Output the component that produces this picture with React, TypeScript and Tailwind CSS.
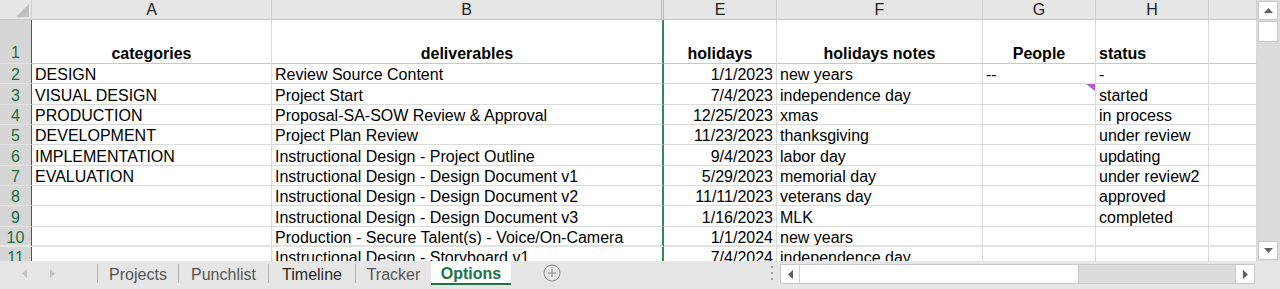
import type { ReactNode } from "react";

type Row = {
  n: number;
  h: string;
  bottom: string;
  hdrBottom: string;
  a?: string;
  b?: string;
  e?: string;
  f?: string;
  g?: string;
  st?: string;
  note?: boolean;
};

const GRID = "border-b border-b-[#dadada]";
const HDR = "border-b border-b-[#e4e4e4]";

const ROWS: Row[] = [
  { n: 2, h: "h-[20px]", bottom: GRID, hdrBottom: HDR, a: "DESIGN", b: "Review Source Content", e: "1/1/2023", f: "new years", g: "--", st: "-" },
  { n: 3, h: "h-[21px]", bottom: GRID, hdrBottom: HDR, a: "VISUAL DESIGN", b: "Project Start", e: "7/4/2023", f: "independence day", st: "started", note: true },
  { n: 4, h: "h-[20px]", bottom: GRID, hdrBottom: HDR, a: "PRODUCTION", b: "Proposal-SA-SOW Review & Approval", e: "12/25/2023", f: "xmas", st: "in process" },
  { n: 5, h: "h-[20px]", bottom: GRID, hdrBottom: HDR, a: "DEVELOPMENT", b: "Project Plan Review", e: "11/23/2023", f: "thanksgiving", st: "under review" },
  { n: 6, h: "h-[21px]", bottom: GRID, hdrBottom: HDR, a: "IMPLEMENTATION", b: "Instructional Design - Project Outline", e: "9/4/2023", f: "labor day", st: "updating" },
  { n: 7, h: "h-[20px]", bottom: GRID, hdrBottom: HDR, a: "EVALUATION", b: "Instructional Design - Design Document v1", e: "5/29/2023", f: "memorial day", st: "under review2" },
  { n: 8, h: "h-[20px]", bottom: GRID, hdrBottom: HDR, b: "Instructional Design - Design Document v2", e: "11/11/2023", f: "veterans day", st: "approved" },
  { n: 9, h: "h-[21px]", bottom: GRID, hdrBottom: HDR, b: "Instructional Design - Design Document v3", e: "1/16/2023", f: "MLK", st: "completed" },
  { n: 10, h: "h-[20px]", bottom: "border-b-2 border-b-[#e2e2e2]", hdrBottom: "border-b-2 border-b-[#e8e8e8]", b: "Production - Secure Talent(s) - Voice/On-Camera", e: "1/1/2024", f: "new years" },
  { n: 11, h: "h-[20px]", bottom: GRID, hdrBottom: HDR, b: "Instructional Design - Storyboard v1", e: "7/4/2024", f: "independence day" },
];

function Cell({ w, bottom, right, align = "justify-start", children, bold }: {
  w: string;
  bottom: string;
  right: string;
  align?: string;
  children?: ReactNode;
  bold?: boolean;
}) {
  return (
    <div
      className={`${w} ${bottom} ${right} ${align} ${bold ? "font-bold items-end" : "items-center pt-[2px]"} relative flex h-full shrink-0 overflow-hidden whitespace-nowrap px-[3px]`}
    >
      {children}
    </div>
  );
}

const R = "border-r border-r-[#dadada]";
const RB = "border-r-2 border-r-[#2f8a57]";

function Tri({ dir, color }: { dir: "l" | "r" | "u" | "d"; color: string }) {
  const d =
    dir === "l" ? "M6 0 L6 9 L1 4.5 Z" :
    dir === "r" ? "M1 0 L1 9 L6 4.5 Z" :
    dir === "u" ? "M0 6 L9 6 L4.5 1 Z" : "M0 1 L9 1 L4.5 6 Z";
  const vb = dir === "l" || dir === "r" ? "0 0 7 9" : "0 0 9 7";
  const size = dir === "l" || dir === "r" ? "w-[7px] h-[9px]" : "w-[9px] h-[7px]";
  return (
    <svg viewBox={vb} className={size}>
      <path d={d} fill={color} />
    </svg>
  );
}

export default function App() {
  return (
    <div className="flex h-[289px] w-[1280px] flex-col overflow-hidden bg-white font-['Liberation_Sans',Arial,sans-serif] text-[16px] leading-[19px] text-black">
      <div className="flex h-[261px] shrink-0">
        {/* sheet grid */}
        <div className="flex w-[1257px] shrink-0 flex-col overflow-hidden">
          {/* column letters */}
          <div className="flex h-[20px] shrink-0 border-b border-b-[#c6c6c6] bg-[#e6e6e6] text-[#222]">
            <div className="flex w-[32px] shrink-0 items-end justify-end border-r border-r-[#cfcfcf] pb-[2px] pr-[2px]">
              <svg viewBox="0 0 13 13" className="h-[13px] w-[13px]">
                <path d="M13 0 L13 13 L0 13 Z" fill="#bfbfbf" />
              </svg>
            </div>
            <div className="flex w-[240px] shrink-0 items-center justify-center border-r border-r-[#cfcfcf]">A</div>
            <div className="flex w-[392px] shrink-0 items-center justify-center border-r-[3px] border-double border-r-[#b8b8b8]">B</div>
            <div className="flex w-[113px] shrink-0 items-center justify-center border-r border-r-[#cfcfcf]">E</div>
            <div className="flex w-[206px] shrink-0 items-center justify-center border-r border-r-[#cfcfcf]">F</div>
            <div className="flex w-[113px] shrink-0 items-center justify-center border-r border-r-[#cfcfcf]">G</div>
            <div className="flex w-[113px] shrink-0 items-center justify-center border-r border-r-[#cfcfcf]">H</div>
            <div className="w-[48px] shrink-0 border-r border-r-[#cfcfcf]" />
          </div>

          {/* header row 1 */}
          <div className="flex h-[44px] shrink-0">
            <div className="flex w-[32px] shrink-0 items-end justify-center border-r border-b border-r-[#217346] border-b-[#e4e4e4] bg-[#d6d6d6] pb-[1px] text-[#1e6b40]">1</div>
            <Cell w="w-[240px]" bottom="border-b border-b-[#c8c8c8]" right={R} align="justify-center" bold>categories</Cell>
            <Cell w="w-[392px]" bottom="border-b border-b-[#c8c8c8]" right={RB} align="justify-center" bold>deliverables</Cell>
            <Cell w="w-[113px]" bottom="border-b border-b-[#c8c8c8]" right={R} align="justify-center" bold>holidays</Cell>
            <Cell w="w-[206px]" bottom="border-b border-b-[#c8c8c8]" right={R} align="justify-center" bold>holidays notes</Cell>
            <Cell w="w-[113px]" bottom="border-b border-b-[#c8c8c8]" right={R} align="justify-center" bold>People</Cell>
            <Cell w="w-[113px]" bottom="border-b border-b-[#c8c8c8]" right={R} bold>status</Cell>
            <Cell w="w-[48px]" bottom="border-b border-b-[#c8c8c8]" right={R} />
          </div>

          {ROWS.map((r) => (
            <div key={r.n} className={`${r.h} flex shrink-0`}>
              <div className={`${r.hdrBottom} flex w-[32px] shrink-0 items-center justify-center border-r border-r-[#217346] bg-[#d6d6d6] pt-[2px] text-[#1e6b40]`}>
                {r.n}
              </div>
              <Cell w="w-[240px]" bottom={r.bottom} right={R}>{r.a}</Cell>
              <Cell w="w-[392px]" bottom={r.bottom} right={RB}>{r.b}</Cell>
              <Cell w="w-[113px]" bottom={r.bottom} right={R} align="justify-end">{r.e}</Cell>
              <Cell w="w-[206px]" bottom={r.bottom} right={R}>{r.f}</Cell>
              <Cell w="w-[113px]" bottom={r.bottom} right={R}>
                {r.g}
                {r.note && (
                  <svg viewBox="0 0 9 7" className="absolute right-0 top-0 h-[7px] w-[9px]">
                    <path d="M0 0 L9 0 L9 7 Z" fill="#b65ac6" />
                  </svg>
                )}
              </Cell>
              <Cell w="w-[113px]" bottom={r.bottom} right={R}>{r.st}</Cell>
              <Cell w="w-[48px]" bottom={r.bottom} right={R} />
            </div>
          ))}
        </div>

        {/* vertical scrollbar */}
        <div className="flex w-[23px] shrink-0 flex-col bg-[#dcdcdc] pl-[1px]">
          <div className="mt-[1px] flex h-[19px] w-[20px] items-center justify-center border border-[#c8c8c8] bg-white">
            <Tri dir="u" color="#5f5f5f" />
          </div>
          <div className="mt-[1px] h-[21px] w-[20px] border border-[#c8c8c8] bg-white" />
          <div className="flex-1" />
          <div className="mb-[1px] flex h-[19px] w-[20px] items-center justify-center border border-[#c8c8c8] bg-white">
            <Tri dir="d" color="#5f5f5f" />
          </div>
        </div>
      </div>

      {/* sheet tabs */}
      <div className="flex h-[28px] shrink-0 items-start bg-[#e6e6e6] text-[#555]">
        <div className="flex h-[24px] w-[97px] shrink-0 items-center gap-[21px] pl-[21px]">
          <Tri dir="l" color="#c2c2c2" />
          <Tri dir="r" color="#c2c2c2" />
        </div>
        <div className="mt-[3px] flex h-[19px] w-[81px] shrink-0 items-center justify-center border-l border-l-[#b4b4b4] pt-[1px]">Projects</div>
        <div className="mt-[3px] flex h-[19px] w-[90px] shrink-0 items-center justify-center border-l border-l-[#b4b4b4] pt-[1px]">Punchlist</div>
        <div className="mt-[3px] flex h-[19px] w-[87px] shrink-0 items-center justify-center border-l border-l-[#b4b4b4] pt-[1px] text-[#262626]">Timeline</div>
        <div className="mt-[3px] flex h-[19px] w-[76px] shrink-0 items-center justify-center border-l border-l-[#b4b4b4] pt-[1px]">Tracker</div>
        <div className="flex h-[24px] w-[80px] shrink-0 items-center justify-center border-b-2 border-b-[#217346] bg-white pt-[2px] font-bold text-[#217346]">Options</div>
        <div className="ml-[32px] flex h-[24px] items-center">
          <svg viewBox="0 0 18 18" className="h-[18px] w-[18px]">
            <circle cx="9" cy="9" r="8" fill="none" stroke="#8c8c8c" strokeWidth="1" />
            <path d="M9 5 V13 M5 9 H13" stroke="#8c8c8c" strokeWidth="1.2" />
          </svg>
        </div>
        <div className="ml-auto flex h-[24px] w-[15px] flex-col items-center justify-center gap-[4px] pr-[2px]">
          <span className="h-[2px] w-[2px] bg-[#a0a0a0]" />
          <span className="h-[2px] w-[2px] bg-[#a0a0a0]" />
          <span className="h-[2px] w-[2px] bg-[#a0a0a0]" />
        </div>
        <div className="mr-[25px] mt-[3px] flex h-[20px] w-[475px] shrink-0 border border-[#c8c8c8] bg-[#dcdcdc]">
          <div className="flex w-[19px] items-center justify-center border-r border-r-[#d0d0d0] bg-white">
            <Tri dir="l" color="#5f5f5f" />
          </div>
          <div className="w-[279px] border-r border-r-[#c8c8c8] bg-white" />
          <div className="flex-1" />
          <div className="flex w-[19px] items-center justify-center border-l border-l-[#c8c8c8] bg-white">
            <Tri dir="r" color="#5f5f5f" />
          </div>
        </div>
      </div>
    </div>
  );
}
